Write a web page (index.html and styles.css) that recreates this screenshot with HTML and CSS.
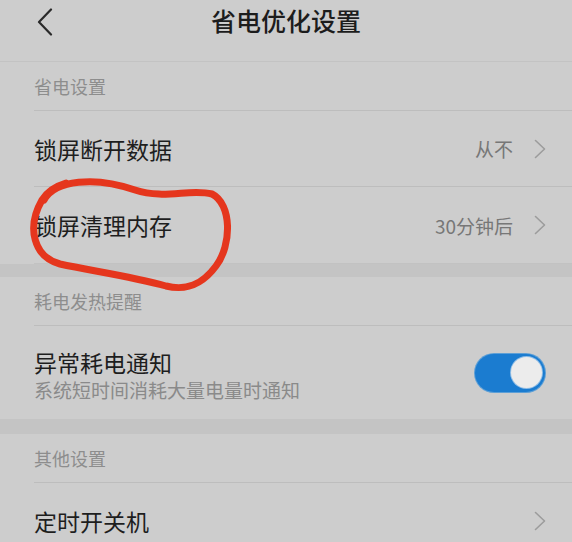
FILE: index.html
```html
<!DOCTYPE html>
<html lang="zh-CN">
<head>
<meta charset="utf-8">
<title>省电优化设置</title>
<link rel="stylesheet" href="styles.css">
</head>
<body>
<div class="screen">
  <header class="header">
    <div class="back">
      <svg width="16" height="28" viewBox="0 0 16 28"><path d="M14 1.5 L2 14 L14 26.5" fill="none" stroke="#2a2a2a" stroke-width="2.2" stroke-linecap="round" stroke-linejoin="round"/></svg>
    </div>
    <h1 class="title">省电优化设置</h1>
    <div></div>
  </header>

  <section class="group">
    <div class="label"><span>省电设置</span></div>
    <div class="row">
      <span class="row-title">锁屏断开数据</span>
      <span class="row-end"><span class="value">从不</span><svg class="chev" width="12" height="20" viewBox="0 0 12 20"><path d="M1.5 1.5 L10.5 10 L1.5 18.5" fill="none" stroke="#9c9c9c" stroke-width="1.6" stroke-linecap="round" stroke-linejoin="round"/></svg></span>
    </div>
    <div class="row row-b last">
      <span class="row-title">锁屏清理内存</span>
      <span class="row-end"><span class="value">30分钟后</span><svg class="chev" width="12" height="20" viewBox="0 0 12 20"><path d="M1.5 1.5 L10.5 10 L1.5 18.5" fill="none" stroke="#9c9c9c" stroke-width="1.6" stroke-linecap="round" stroke-linejoin="round"/></svg></span>
    </div>
  </section>
  <div class="band"></div>

  <section class="group">
    <div class="label"><span>耗电发热提醒</span></div>
    <div class="row tall">
      <div class="row-text">
        <span class="row-title">异常耗电通知</span>
        <span class="row-sub">系统短时间消耗大量电量时通知</span>
      </div>
      <span class="toggle"><span class="knob"></span></span>
    </div>
  </section>
  <div class="band band-b"></div>

  <section class="group">
    <div class="label"><span>其他设置</span></div>
    <div class="row">
      <span class="row-title">定时开关机</span>
      <span class="row-end"><svg class="chev" width="12" height="20" viewBox="0 0 12 20"><path d="M1.5 1.5 L10.5 10 L1.5 18.5" fill="none" stroke="#9c9c9c" stroke-width="1.6" stroke-linecap="round" stroke-linejoin="round"/></svg></span>
    </div>
  </section>

  <svg class="scribble" width="572" height="542" viewBox="0 0 572 542">
    <path d="M44 200 C 55 180, 95 176, 135 190 C 165 200, 190 188, 212 194 C 232 204, 232 245, 216 266 C 202 285, 186 291, 166 286 C 130 276, 92 271, 60 264 C 34 257, 26 228, 42 200 C 48 190, 56 186, 66 183" fill="none" stroke="#e5361d" stroke-width="7" stroke-linecap="round" stroke-linejoin="round"/>
  </svg>
</div>
</body>
</html>
```

FILE: styles.css
```css
html, body {
  margin: 0;
  padding: 0;
}

body {
  background: #cdcdcd;
  font-family: "Noto Sans CJK SC", "Noto Sans", "Liberation Sans", sans-serif;
  color: #1e1e1e;
}

.screen {
  position: relative;
  width: 572px;
  height: 542px;
  overflow: hidden;
}

.header {
  height: 61px;
  display: grid;
  grid-template-columns: 1fr auto 1fr;
  align-items: center;
  border-bottom: 1px solid #c3c3c3;
}

.back {
  padding-left: 37px;
  padding-bottom: 18px;
  display: flex;
  align-items: center;
}

.title {
  margin: 0;
  font-size: 25px;
  font-weight: 500;
  line-height: 1;
  padding-bottom: 20px;
  color: #1c1c1c;
}

.group {
  display: flex;
  flex-direction: column;
}

.label {
  height: 48px;
  margin-left: 34px;
  display: flex;
  align-items: center;
  border-bottom: 1px solid #bdbdbd;
  font-size: 18px;
  color: #8d8d8d;
}

.row {
  height: 75px;
  margin-left: 34px;
  padding-right: 26px;
  display: flex;
  align-items: center;
  justify-content: space-between;
  border-bottom: 1px solid #bdbdbd;
}

.row-b {
  height: 76px;
}

.row.last {
  border-bottom-color: #c2c2c2;
}

.row.tall {
  height: 93px;
  padding-right: 27px;
  border-bottom: none;
}

.row-title {
  font-size: 23px;
  line-height: 30px;
  color: #1e1e1e;
}

.row-text {
  display: flex;
  flex-direction: column;
  gap: 0;
  padding-top: 4px;
}

.row-sub {
  font-size: 19px;
  line-height: 26px;
  color: #8a8a8a;
}

.row-end {
  display: flex;
  align-items: center;
  gap: 21px;
}

.value {
  font-size: 19px;
  color: #777777;
}

.chev {
  display: block;
}

.band {
  height: 13px;
  background: #c4c4c4;
}

.band-b {
  height: 15px;
}

.toggle {
  width: 70px;
  height: 38px;
  border-radius: 19px;
  background: #1b7cd0;
  box-shadow: 0 0 0 1px #5d9fd6;
  display: flex;
  align-items: center;
  justify-content: flex-end;
  padding-right: 3px;
  box-sizing: border-box;
}

.knob {
  width: 31px;
  height: 31px;
  border-radius: 50%;
  background: #ececec;
  box-shadow: 0 0 0 1px #8fbde6;
}

.scribble {
  position: absolute;
  left: 0;
  top: 0;
  pointer-events: none;
}
```
